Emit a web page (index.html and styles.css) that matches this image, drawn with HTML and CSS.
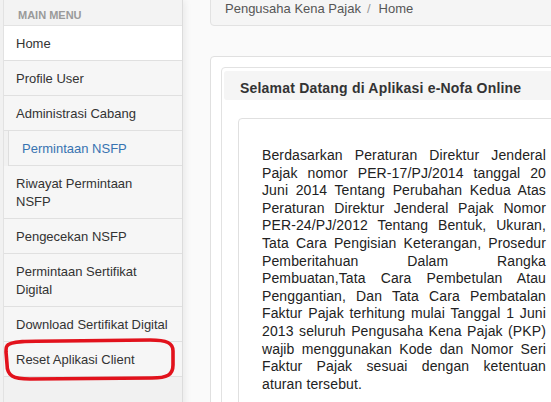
FILE: index.html
```html
<!DOCTYPE html>
<html lang="id">
<head>
<meta charset="utf-8">
<title>e-Nofa Online</title>
<link rel="stylesheet" href="styles.css">
</head>
<body>
<div class="page">
  <aside class="sidebar">
    <nav class="nav">
      <div class="nav-title">MAIN MENU</div>
      <a class="nav-item active" href="#">Home</a>
      <a class="nav-item" href="#">Profile User</a>
      <a class="nav-item" href="#">Administrasi Cabang</a>
      <div class="subnav">
        <a class="sub-item" href="#">Permintaan NSFP</a>
      </div>
      <a class="nav-item" href="#">Riwayat Permintaan NSFP</a>
      <a class="nav-item" href="#">Pengecekan NSFP</a>
      <a class="nav-item" href="#">Permintaan Sertifikat Digital</a>
      <a class="nav-item" href="#">Download Sertifikat Digital</a>
      <a class="nav-item marked" href="#">Reset Aplikasi Client
        <svg class="mark" width="180" height="48" viewBox="0 0 180 48" aria-hidden="true">
          <path d="M7 9 C9 4 28 4 60 4 L150 3 C167 3 173 6 173 14 L173 28 C173 38 167 41 152 41 L30 42 C13 42 7 39 7 27 L6 15 C6 12 6 10 7 9 Z"/>
        </svg>
      </a>
    </nav>
  </aside>
  <main class="main">
    <div class="breadcrumb">
      <span class="crumb">Pengusaha Kena Pajak</span><span class="sep">/</span><span class="crumb">Home</span>
    </div>
    <section class="panel">
      <div class="inner-panel">
        <div class="panel-heading">Selamat Datang di Aplikasi e-Nofa Online</div>
        <div class="content-box">
          <p class="lead">Berdasarkan Peraturan Direktur Jenderal Pajak nomor PER-17/PJ/2014 tanggal 20 Juni 2014 Tentang Perubahan Kedua Atas Peraturan Direktur Jenderal Pajak Nomor PER-24/PJ/2012 Tentang Bentuk, Ukuran, Tata Cara Pengisian Keterangan, Prosedur Pemberitahuan Dalam Rangka Pembuatan,Tata Cara Pembetulan Atau Penggantian, Dan Tata Cara Pembatalan Faktur Pajak terhitung mulai Tanggal 1 Juni 2013 seluruh Pengusaha Kena Pajak (PKP) wajib menggunakan Kode dan Nomor Seri Faktur Pajak sesuai dengan ketentuan aturan tersebut.</p>
        </div>
      </div>
    </section>
  </main>
</div>
</body>
</html>
```
FILE: styles.css
```css
html, body {
  margin: 0;
  padding: 0;
  overflow: hidden;
  height: 100%;
}
body {
  font-family: "Liberation Sans", Arial, sans-serif;
  color: #333;
  background: #fafafa;
}
.page {
  display: flex;
  width: 640px;
  min-height: 402px;
}
.sidebar {
  flex: 0 0 183px;
  box-sizing: border-box;
  background: #f1f1f1;
  border-right: 1px solid #dcdcdc;
  padding-left: 3px;
  box-shadow: 2px 0 7px rgba(0, 0, 0, 0.07);
  position: relative;
  z-index: 1;
}
.nav {
  display: flex;
  flex-direction: column;
  border-left: 1px solid #e2e2e2;
  min-height: 402px;
}
.nav-title {
  padding: 10px 14px 4px;
  font-size: 11px;
  line-height: 11px;
  font-weight: bold;
  color: #9a9a9a;
  background: #f3f3f3;
  border-bottom: 1px solid #e3e3e3;
}
.nav-item {
  display: block;
  padding: 9px 12px 7px;
  font-size: 13px;
  line-height: 18px;
  color: #333;
  text-decoration: none;
  background: #f6f6f6;
  border-bottom: 1px solid #e0e0e0;
}
.nav-item.active {
  background: #fff;
}
.subnav {
  margin-left: 4px;
  border-left: 1px solid #dedede;
}
.sub-item {
  display: block;
  padding: 9px 13px 7px;
  font-size: 13px;
  line-height: 18px;
  color: #3873b1;
  text-decoration: none;
  background: #f6f6f6;
  border-bottom: 1px solid #e0e0e0;
}
.marked {
  position: relative;
}
.mark {
  position: absolute;
  left: -4px;
  top: -5px;
  overflow: visible;
}
.mark path {
  fill: none;
  stroke: #e2121c;
  stroke-width: 3.6;
  stroke-linejoin: round;
}
.main {
  flex: 1;
  padding-left: 27px;
  margin-top: -10px;
}
.breadcrumb {
  padding: 9px 14px 7px;
  font-size: 13px;
  line-height: 18px;
  color: #555;
  background: #f5f5f5;
  border: 1px solid #e2e2e2;
  border-radius: 4px;
}
.sep {
  color: #999;
  margin: 0 8px 0 6px;
}
.panel {
  margin-top: 30px;
  padding: 10px;
  background: #fff;
  border: 1px solid #e0e0e0;
  border-radius: 4px;
}
.inner-panel {
  padding: 3px 2px;
  border: 1px solid #e2e2e2;
  border-radius: 4px;
  background: #fff;
}
.panel-heading {
  padding: 8px 16px 3px;
  font-size: 14px;
  line-height: 18px;
  font-weight: bold;
  letter-spacing: 0.2px;
  color: #333;
  background: #f5f5f5;
  border-radius: 3px;
}
.content-box {
  box-sizing: border-box;
  width: 332px;
  margin: 18px 0 0 14px;
  padding: 28px 23px;
  border: 1px solid #e0e0e0;
  border-radius: 4px;
}
.lead {
  margin: 0;
  font-size: 14px;
  line-height: 17.6px;
  letter-spacing: 0.12px;
  text-align: justify;
  color: #222;
}
```
